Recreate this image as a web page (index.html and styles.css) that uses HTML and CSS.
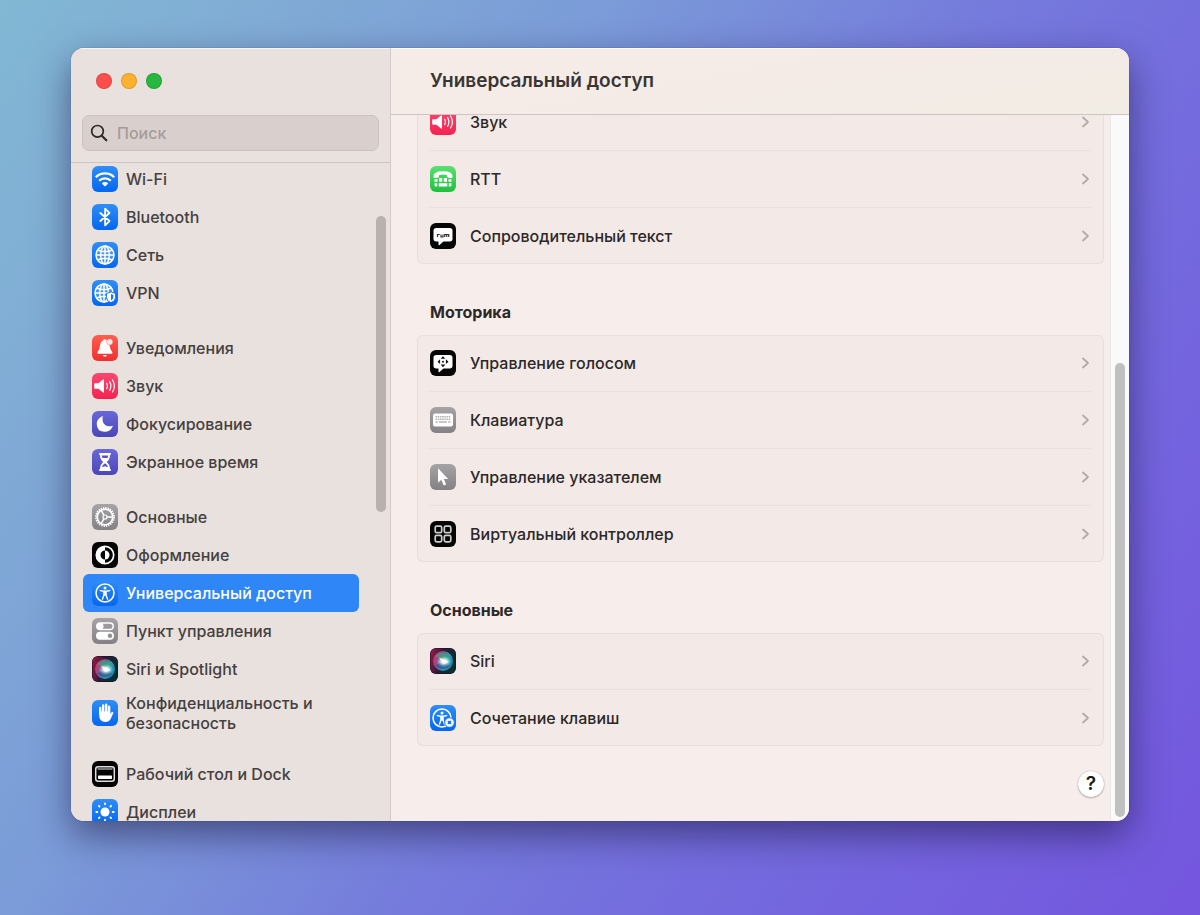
FILE: index.html
```html
<!DOCTYPE html>
<html lang="ru">
<head>
<meta charset="utf-8">
<title>Универсальный доступ</title>
<link rel="stylesheet" href="styles.css">
</head>
<body>
<svg class="defs" aria-hidden="true">
  <defs>
    <linearGradient id="blue" x1="0" y1="0" x2="0" y2="1"><stop offset="0" stop-color="#2f8ef6"/><stop offset="1" stop-color="#0566f0"/></linearGradient>
    <linearGradient id="red" x1="0" y1="0" x2="0" y2="1"><stop offset="0" stop-color="#ff5f50"/><stop offset="1" stop-color="#ee3030"/></linearGradient>
    <linearGradient id="pink" x1="0" y1="0" x2="0" y2="1"><stop offset="0" stop-color="#fa4870"/><stop offset="1" stop-color="#f52350"/></linearGradient>
    <linearGradient id="indigo" x1="0" y1="0" x2="0" y2="1"><stop offset="0" stop-color="#6a68d8"/><stop offset="1" stop-color="#4a45b8"/></linearGradient>
    <linearGradient id="gray" x1="0" y1="0" x2="0" y2="1"><stop offset="0" stop-color="#a5a3a6"/><stop offset="1" stop-color="#838184"/></linearGradient>
    <linearGradient id="green" x1="0" y1="0" x2="0" y2="1"><stop offset="0" stop-color="#5be070"/><stop offset="1" stop-color="#1fc040"/></linearGradient>
    <linearGradient id="siri-bg" x1="0" y1="0.3" x2="1" y2="0.6"><stop offset="0" stop-color="#8f1745"/><stop offset="0.45" stop-color="#2a1c3a"/><stop offset="1" stop-color="#06302f"/></linearGradient>
    <linearGradient id="siri-orb" x1="0" y1="0.2" x2="1" y2="0.7"><stop offset="0" stop-color="#e02860"/><stop offset="0.4" stop-color="#7a5a9a"/><stop offset="0.65" stop-color="#2b9fb0"/><stop offset="1" stop-color="#1c7fa5"/></linearGradient>
    <radialGradient id="siri-glow"><stop offset="0" stop-color="#fff"/><stop offset="0.35" stop-color="#fff" stop-opacity="0.85"/><stop offset="1" stop-color="#9fe8f0" stop-opacity="0"/></radialGradient>

    <symbol id="i-wifi" viewBox="0 0 26 26"><rect width="26" height="26" rx="6" fill="url(#blue)"/><g fill="none" stroke="#fff" stroke-width="2.3"><path d="M3.800 11.200a13 13 0 0 1 18.400 0"/><path d="M7.200 14.700a8.200 8.200 0 0 1 11.600 0"/></g><path d="M13 20.600l-3.200-3.200a4.500 4.500 0 0 1 6.400 0z" fill="#fff"/></symbol>
    <symbol id="i-bluetooth" viewBox="0 0 26 26"><rect width="26" height="26" rx="6" fill="url(#blue)"/><path d="M8.300 9l9.200 8-4.400 4.300V4.700L17.500 9l-9.200 8" fill="none" stroke="#fff" stroke-width="1.800" stroke-linejoin="round" stroke-linecap="round"/></symbol>
    <symbol id="globe" viewBox="0 0 26 26"><circle cx="13" cy="13" r="9" fill="#fff" fill-opacity=".2"/><g fill="none" stroke="#fff" stroke-width="1.500"><circle cx="13" cy="13" r="9"/><ellipse cx="13" cy="13" rx="4.300" ry="9"/><path d="M13 4v18M4 13h18M5.700 8q7.300 3.400 14.600 0M5.700 18q7.300-3.400 14.600 0"/></g></symbol>
    <symbol id="i-network" viewBox="0 0 26 26"><rect width="26" height="26" rx="6" fill="url(#blue)"/><use href="#globe"/></symbol>
    <symbol id="i-vpn" viewBox="0 0 26 26"><rect width="26" height="26" rx="6" fill="url(#blue)"/><use href="#globe" x="-1"/><path d="M19 11.800l4.600 1.700v4q0 3.600-4.600 5.200-4.600-1.600-4.600-5.200v-4z" fill="#fff" stroke="#0f70f2" stroke-width="1"/><path d="M19 14v6.500q2.300-1 2.300-3.200v-2.500z" fill="#1c79f3"/></symbol>
    <symbol id="i-bell" viewBox="0 0 26 26"><rect width="26" height="26" rx="6" fill="url(#red)"/><path d="M12.800 4.300q1.500 0 2 1.200-1.300 3.700 2.900 5 .1 4 2.600 6.500.8 1.700-.8 1.700H6.300q-1.600 0-.8-1.700Q7.900 14.500 8 10.500 8.500 6.600 11 5.500q.5-1.200 1.800-1.200z" fill="#fff"/><path d="M10.800 20h4q-.4 1.800-2 1.800t-2-1.800z" fill="#fff"/><circle cx="17.800" cy="6.900" r="2.800" fill="#ffe9e6"/></symbol>
    <symbol id="i-sound" viewBox="0 0 26 26"><rect width="26" height="26" rx="6" fill="url(#pink)"/><path d="M3 10.300h3.500L11 6.500q1-.7 1 .5v12q0 1.200-1 .5l-4.500-3.800H3q-.8 0-.8-.8v-3.800q0-.8.800-.8z" fill="#fff"/><g fill="none" stroke="#fff" stroke-linecap="round" stroke-width="1.200"><path d="M14.700 10.300q1.600 2.700 0 5.400"/><path d="M17.600 8.600q2.600 4.400 0 8.800"/><path d="M20.500 7q3.800 6 0 12"/></g></symbol>
    <symbol id="i-moon" viewBox="0 0 26 26"><rect width="26" height="26" rx="6" fill="url(#indigo)"/><path d="M10.200 5.200q.6-.3.500.5-1 5.400 2.500 8.300 3 2.200 7 .7.900-.2.500.7-2.500 5.300-7.900 5.300-8 0-8-7.800 0-5 5.400-7.700z" fill="#fff"/></symbol>
    <symbol id="i-hourglass" viewBox="0 0 26 26"><rect width="26" height="26" rx="6" fill="url(#indigo)"/><path d="M8 4h10q1 0 1 1t-1 1q0 4.500-3.300 7Q18 15.500 18 20q1 0 1 1t-1 1H8q-1 0-1-1t1-1q0-4.500 3.300-7Q8 10.500 8 6 7 6 7 5t1-1z" fill="#fff"/><path d="M9.700 6.500h6.600l-.7 2.500h-5.200zM13 14.200q2.500 1.500 3.200 4L13 17.200l-3.200 1q.7-2.500 3.200-4z" fill="#5854c6"/></symbol>
    <symbol id="i-gear" viewBox="0 0 26 26"><rect width="26" height="26" rx="6" fill="url(#gray)"/><g fill="none" stroke="#fff"><circle cx="13" cy="13" r="8.700" stroke-width="2.400" stroke-dasharray="1.370 .907"/><circle cx="13" cy="13" r="7.700" stroke-width="1.600"/><circle cx="13" cy="13" r="2" stroke-width="1.200"/><path d="M15 13h6M12 11.300L9.200 6.400M12 14.700l-2.800 4.900" stroke-width="1.500"/></g></symbol>
    <symbol id="i-appearance" viewBox="0 0 26 26"><rect width="26" height="26" rx="6" fill="#050505"/><circle cx="13" cy="13" r="8.700" fill="none" stroke="#fff" stroke-width="1.700"/><path d="M13 4.500a8.500 8.500 0 0 0 0 17v-4a4.500 4.500 0 0 1 0-9z" fill="#fff"/><path d="M13 8.500a4.500 4.500 0 0 1 0 9z" fill="#fff"/></symbol>
    <symbol id="person" viewBox="0 0 26 26"><circle cx="13" cy="13" r="9" fill="none" stroke="#fff" stroke-width="1.500"/><circle cx="13" cy="7.900" r="1.500" fill="#fff"/><path d="M8.300 10.600l3.400.6h2.600l3.400-.6M13 11v4M11.900 11.500v3.700l-1.500 4M14.100 11.500v3.700l1.500 4" fill="none" stroke="#fff" stroke-width="1.400" stroke-linecap="round"/></symbol>
    <symbol id="i-access" viewBox="0 0 26 26"><rect width="26" height="26" rx="6" fill="url(#blue)"/><use href="#person"/></symbol>
    <symbol id="i-control" viewBox="0 0 26 26"><rect width="26" height="26" rx="6" fill="url(#gray)"/><rect x="4.800" y="5" width="16.400" height="6.600" rx="3.300" fill="none" stroke="#fff" stroke-width="1.500"/><circle cx="8.300" cy="8.300" r="3.200" fill="#fff"/><rect x="4" y="13.700" width="18" height="8" rx="4" fill="#fff"/><circle cx="18" cy="17.700" r="2.200" fill="#918f92"/></symbol>
    <symbol id="i-siri" viewBox="0 0 26 26"><rect width="26" height="26" rx="6" fill="#120f1c"/><rect x=".5" y=".5" width="25" height="25" rx="5.500" fill="url(#siri-bg)"/><circle cx="13" cy="13" r="10" fill="url(#siri-orb)"/><path d="M5 8.500Q12 1.500 20 8l-5 3z" fill="#35a878" fill-opacity=".75"/><path d="M5 17q7 8 15 1l-6-4z" fill="#31578f" fill-opacity=".7"/><ellipse cx="14" cy="13.500" rx="7.500" ry="5.500" fill="url(#siri-glow)"/><path d="M9 9.500l10 4.500-6 2z" fill="#fff" fill-opacity=".8"/></symbol>
    <symbol id="i-hand" viewBox="0 0 26 26"><rect width="26" height="26" rx="6" fill="url(#blue)"/><path d="M8.300 13V8M11.200 12V5.500M14.200 12V4.700M17.100 13V6.800" stroke="#fff" stroke-width="2.400" stroke-linecap="round"/><path d="M7.200 11.500h11v2.600l1.400-1.900q1-.9 1.600 0 .3.600-.1 1.400L18.600 19q-1.500 3-5.200 3-6.200 0-6.200-6.500z" fill="#fff"/></symbol>
    <symbol id="i-dock" viewBox="0 0 26 26"><rect width="26" height="26" rx="6" fill="#050505"/><rect x="3.700" y="5.700" width="18.600" height="14.600" rx="2.500" fill="none" stroke="#ddd" stroke-width="1.500"/><path d="M5.500 8h15" stroke="#999" stroke-width="1.500"/><rect x="6" y="14.500" width="14" height="3.500" rx=".7" fill="#fff"/></symbol>
    <symbol id="i-sun" viewBox="0 0 26 26"><rect width="26" height="26" rx="6" fill="url(#blue)"/><circle cx="13" cy="13" r="4.500" fill="#fff"/><g stroke="#fff" stroke-width="1.800" stroke-linecap="round"><path d="M13 4.300v1M13 20.700v1M4.300 13h1M20.700 13h1M6.900 6.900l.6.600M18.500 18.500l.6.600M6.900 19.100l.6-.6M18.500 7.500l.6-.6"/></g></symbol>
    <symbol id="i-rtt" viewBox="0 0 26 26"><rect width="26" height="26" rx="6" fill="url(#green)"/><path d="M3.500 11.200Q2.700 5.300 13 5.300t9.500 5.900q-.2 1-1.300.9l-3-.3q-1-.2-1.100-1.200l-.2-1.500q-3.900-1-7.800 0l-.2 1.500q-.1 1-1.100 1.200l-3 .3q-1.100.1-1.300-.9z" fill="#fff"/><path d="M4.500 13.200h3v2.500h-3zM9 12h3.200v3.700H9zM13.800 12H17v3.700h-3.200zM18.500 13.200h3v2.500h-3zM4.500 17.200h2.700v3.300H6q-1.500 0-1.500-1.500zM8.700 17.200h8.600v3.300H8.700zM18.800 17.200h2.700V19q0 1.500-1.500 1.500h-1.200z" fill="#fff"/></symbol>
    <symbol id="bubble" viewBox="0 0 26 26"><path d="M6.200 5h13.600q2.700 0 2.700 2.700v8.100q0 2.700-2.700 2.700h-6.300l-4 3.500q-1 .6-1-.6v-2.900H6.200q-2.700 0-2.700-2.700V7.700Q3.500 5 6.200 5z" fill="#fff"/></symbol>
    <symbol id="i-caption" viewBox="0 0 26 26"><rect width="26" height="26" rx="6" fill="#050505"/><use href="#bubble"/><path d="M7.500 14v-2.500h2.300M11 11.500V14h2v-2.500M14.700 14v-2.500h4V14M16.700 11.500V14" fill="none" stroke="#333" stroke-width="1.200"/></symbol>
    <symbol id="i-voice" viewBox="0 0 26 26"><rect width="26" height="26" rx="6" fill="#050505"/><use href="#bubble"/><path d="M13 6.200l2.400 2.600h-4.800zM13 17.200l2.400-2.600h-4.800zM7.500 11.700l2.600-2.400v4.800zM18.500 11.700l-2.600-2.400v4.800z" fill="#111"/><circle cx="13" cy="11.700" r="1" fill="#111"/></symbol>
    <symbol id="i-keyboard" viewBox="0 0 26 26"><rect width="26" height="26" rx="6" fill="url(#gray)"/><rect x="3" y="6.500" width="20" height="13" rx="2" fill="#fff"/><path d="M5.500 9.700h15M5.500 12.300h15" stroke="#b5b3b5" stroke-width="1.600" stroke-dasharray="1.600 .6"/><path d="M5.500 15h2.200M9 15h8M18.300 15h2.200" stroke="#b5b3b5" stroke-width="1.600"/></symbol>
    <symbol id="i-pointer" viewBox="0 0 26 26"><rect width="26" height="26" rx="6" fill="url(#gray)"/><path d="M8 4.300v14.500l3.300-3 2.400 5.800 2.500-1.100-2.400-5.500h4.400z" fill="#fff"/></symbol>
    <symbol id="i-switch" viewBox="0 0 26 26"><rect width="26" height="26" rx="6" fill="#050505"/><g fill="none" stroke="#ccc" stroke-width="1.700"><rect x="5.200" y="5.200" width="6.500" height="6.500" rx="1.500"/><rect x="14.300" y="5.200" width="6.500" height="6.500" rx="1.500"/><rect x="5.200" y="14.300" width="6.500" height="6.500" rx="1.500"/><rect x="14.300" y="14.300" width="6.500" height="6.500" rx="1.500"/></g></symbol>
    <symbol id="i-shortcut" viewBox="0 0 26 26"><rect width="26" height="26" rx="6" fill="url(#blue)"/><use href="#person" x="-1"/><circle cx="19.500" cy="17.500" r="4.800" fill="#fff" stroke="#1673f2" stroke-width="1"/><path d="M17.800 15.800l3.400 3.400m0-3.400l-3.400 3.400" stroke="#1673f2" stroke-width="1.200"/><circle cx="19.500" cy="17.500" r="1.400" fill="#1673f2"/></symbol>
    <symbol id="chevron" viewBox="0 0 10 14"><path d="M2 2.500L7 7l-5 4.500" fill="none" stroke="#b3abaa" stroke-width="1.800" stroke-linecap="round" stroke-linejoin="round"/></symbol>
  </defs>
</svg>

<div class="window">
  <aside class="sidebar">
    <div class="traffic">
      <button class="light close" aria-label="Закрыть"></button>
      <button class="light minimize" aria-label="Свернуть"></button>
      <button class="light zoom" aria-label="Развернуть"></button>
    </div>
    <div class="search">
      <svg class="search-icon" viewBox="0 0 18 18" aria-hidden="true"><circle cx="7.500" cy="7.300" r="5.800" fill="none" stroke="#2d2927" stroke-width="1.700"/><path d="M11.800 11.800l4.500 4.500" stroke="#2d2927" stroke-width="2.200" stroke-linecap="round"/></svg>
      <input class="search-input" type="text" placeholder="Поиск" aria-label="Поиск">
    </div>
    <div class="nav-area">
      <nav class="nav">
        <div class="group">
          <a class="item" href="#"><svg class="icon"><use href="#i-wifi"/></svg>Wi-Fi</a>
          <a class="item" href="#"><svg class="icon"><use href="#i-bluetooth"/></svg>Bluetooth</a>
          <a class="item" href="#"><svg class="icon"><use href="#i-network"/></svg>Сеть</a>
          <a class="item" href="#"><svg class="icon"><use href="#i-vpn"/></svg>VPN</a>
        </div>
        <div class="group">
          <a class="item" href="#"><svg class="icon"><use href="#i-bell"/></svg>Уведомления</a>
          <a class="item" href="#"><svg class="icon"><use href="#i-sound"/></svg>Звук</a>
          <a class="item" href="#"><svg class="icon"><use href="#i-moon"/></svg>Фокусирование</a>
          <a class="item" href="#"><svg class="icon"><use href="#i-hourglass"/></svg>Экранное время</a>
        </div>
        <div class="group">
          <a class="item" href="#"><svg class="icon"><use href="#i-gear"/></svg>Основные</a>
          <a class="item" href="#"><svg class="icon"><use href="#i-appearance"/></svg>Оформление</a>
          <a class="item selected" href="#" aria-current="page"><svg class="icon"><use href="#i-access"/></svg>Универсальный доступ</a>
          <a class="item" href="#"><svg class="icon"><use href="#i-control"/></svg>Пункт управления</a>
          <a class="item" href="#"><svg class="icon"><use href="#i-siri"/></svg>Siri и Spotlight</a>
          <a class="item tall" href="#"><svg class="icon"><use href="#i-hand"/></svg><span>Конфиденциальность и<br>безопасность</span></a>
        </div>
        <div class="group">
          <a class="item" href="#"><svg class="icon"><use href="#i-dock"/></svg>Рабочий стол и Dock</a>
          <a class="item" href="#"><svg class="icon"><use href="#i-sun"/></svg>Дисплеи</a>
        </div>
      </nav>
      <div class="nav-thumb"></div>
    </div>
  </aside>

  <main class="main">
    <header class="header"><h1 class="title">Универсальный доступ</h1></header>
    <div class="pane">
      <div class="content">
        <div class="card first">
          <a class="row" href="#"><svg class="icon"><use href="#i-sound"/></svg><span class="label">Звук</span><svg class="chevron"><use href="#chevron"/></svg></a>
          <a class="row" href="#"><svg class="icon"><use href="#i-rtt"/></svg><span class="label">RTT</span><svg class="chevron"><use href="#chevron"/></svg></a>
          <a class="row" href="#"><svg class="icon"><use href="#i-caption"/></svg><span class="label">Сопроводительный текст</span><svg class="chevron"><use href="#chevron"/></svg></a>
        </div>
        <h2 class="section">Моторика</h2>
        <div class="card">
          <a class="row" href="#"><svg class="icon"><use href="#i-voice"/></svg><span class="label">Управление голосом</span><svg class="chevron"><use href="#chevron"/></svg></a>
          <a class="row" href="#"><svg class="icon"><use href="#i-keyboard"/></svg><span class="label">Клавиатура</span><svg class="chevron"><use href="#chevron"/></svg></a>
          <a class="row" href="#"><svg class="icon"><use href="#i-pointer"/></svg><span class="label">Управление указателем</span><svg class="chevron"><use href="#chevron"/></svg></a>
          <a class="row" href="#"><svg class="icon"><use href="#i-switch"/></svg><span class="label">Виртуальный контроллер</span><svg class="chevron"><use href="#chevron"/></svg></a>
        </div>
        <h2 class="section">Основные</h2>
        <div class="card">
          <a class="row" href="#"><svg class="icon"><use href="#i-siri"/></svg><span class="label">Siri</span><svg class="chevron"><use href="#chevron"/></svg></a>
          <a class="row" href="#"><svg class="icon"><use href="#i-shortcut"/></svg><span class="label">Сочетание клавиш</span><svg class="chevron"><use href="#chevron"/></svg></a>
        </div>
        <button class="help" aria-label="Справка">?</button>
      </div>
      <div class="track"><div class="thumb"></div></div>
    </div>
  </main>
</div>
</body>
</html>
```

FILE: styles.css
```css
* { box-sizing: border-box; }

body {
  margin: 0;
  height: 100vh;
  padding: 48px 71px 94px;
  display: flex;
  font-family: Inter, "Liberation Sans", sans-serif;
  font-size: 16px;
  font-weight: 500;
  line-height: 20px;
  color: #2c2827;
  background: linear-gradient(123deg, #82b8d4 0%, #80aad5 17%, #7b9cd8 33%, #757adc 56%, #746cde 70%, #7456de 100%);
}

.defs { position: absolute; width: 0; height: 0; }

a { color: inherit; text-decoration: none; }

.window {
  flex: 1;
  min-width: 0;
  display: flex;
  overflow: hidden;
  border-radius: 13px;
  background: #f7eeec;
  box-shadow: 0 0 1px rgba(20, 20, 60, 0.6), 0 14px 36px rgba(25, 20, 60, 0.55);
}

.sidebar {
  flex: 0 0 320px;
  display: flex;
  flex-direction: column;
  background: #e8e1de;
  border-right: 1px solid #d3cbc9;
  box-shadow: inset 0 1px 0 #f7f4f3;
}

.traffic {
  display: flex;
  gap: 9px;
  padding: 25px 25px 26px;
}

.light {
  width: 16px;
  height: 16px;
  padding: 0;
  border-radius: 50%;
  border: 1px solid rgba(0, 0, 0, 0.12);
}

.close { background: #fc4f4c; }
.minimize { background: #fdb12f; }
.zoom { background: #26b83f; }

.search {
  display: flex;
  align-items: center;
  gap: 9px;
  height: 36px;
  margin: 0 11px 11px;
  padding: 0 7px;
  border: 1px solid #cbc3c0;
  border-radius: 7px;
  background: #d9d0ce;
}

.search-icon { width: 18px; height: 18px; flex: none; }

.search-input {
  flex: 1;
  min-width: 0;
  padding: 0;
  border: 0;
  outline: 0;
  background: none;
  font: inherit;
  color: #2c2827;
}

.search-input::placeholder { color: #a59c99; opacity: 1; }

.nav-area {
  position: relative;
  flex: 1;
  min-height: 0;
  overflow: hidden;
  border-top: 1px solid #cdc5c3;
}

.nav {
  display: flex;
  flex-direction: column;
  gap: 17px;
  margin-top: -3px;
  padding: 0 31px 0 12px;
}

.item {
  display: flex;
  align-items: center;
  gap: 8px;
  height: 38px;
  padding: 0 9px;
  border-radius: 6px;
  color: #45403e;
}

.item.tall { height: 50px; }

.item.selected {
  background: #2f86f6;
  color: #fff;
}

.icon { width: 26px; height: 26px; flex: none; }

.nav-thumb {
  position: absolute;
  top: 8%;
  right: 4px;
  width: 10px;
  height: 45%;
  border-radius: 5px;
  background: #b8b1af;
}

.main {
  flex: 1;
  min-width: 0;
  display: flex;
  flex-direction: column;
}

.header {
  display: flex;
  align-items: center;
  height: 67px;
  flex: none;
  padding: 0 39px;
  border-bottom: 1px solid #cdc5c1;
  background: linear-gradient(170deg, #f5ebe7 40%, #f1ece4);
  box-shadow: inset 0 1px 0 #fdfaf8;
}

.title {
  margin: 0;
  font-size: 19px;
  line-height: 24px;
  font-weight: 600;
  color: #3a3533;
}

.pane {
  flex: 1;
  min-height: 0;
  display: flex;
  overflow: hidden;
}

.content {
  flex: 1;
  min-width: 0;
  display: flex;
  flex-direction: column;
  padding: 0 6px 0 26px;
}

.card {
  flex: none;
  padding: 0 13px;
  border-radius: 6px;
  background: #f3eae8;
  box-shadow: inset 0 0 0 1px #e8dedc;
}

.card.first { margin-top: -21px; }

.row {
  display: flex;
  align-items: center;
  gap: 14px;
  height: 57px;
  border-bottom: 1px solid #e9dfdd;
}

.row:last-child { height: 56px; border-bottom: 0; }

.label { flex: 1; }

.chevron { width: 10px; height: 14px; flex: none; }

.section {
  margin: 38px 13px 13px;
  font-size: 16px;
  line-height: 20px;
  font-weight: 700;
}

.help {
  align-self: flex-end;
  flex: none;
  width: 26px;
  height: 26px;
  margin-top: 25px;
  padding: 0;
  border: 0;
  border-radius: 50%;
  background: #fff;
  box-shadow: 0 0 1px rgba(0, 0, 0, 0.4), 0 1px 2px rgba(0, 0, 0, 0.25);
  font: 600 19px/26px Inter, "Liberation Sans", sans-serif;
  color: #1b1918;
}

.track {
  flex: 0 0 19px;
  display: flex;
  flex-direction: column;
  justify-content: flex-end;
  padding: 4px;
  background: #fafafa;
  border-left: 1px solid #ede6e5;
}

.thumb {
  height: 65%;
  border-radius: 5px;
  background: #c0c0c0;
}
```
